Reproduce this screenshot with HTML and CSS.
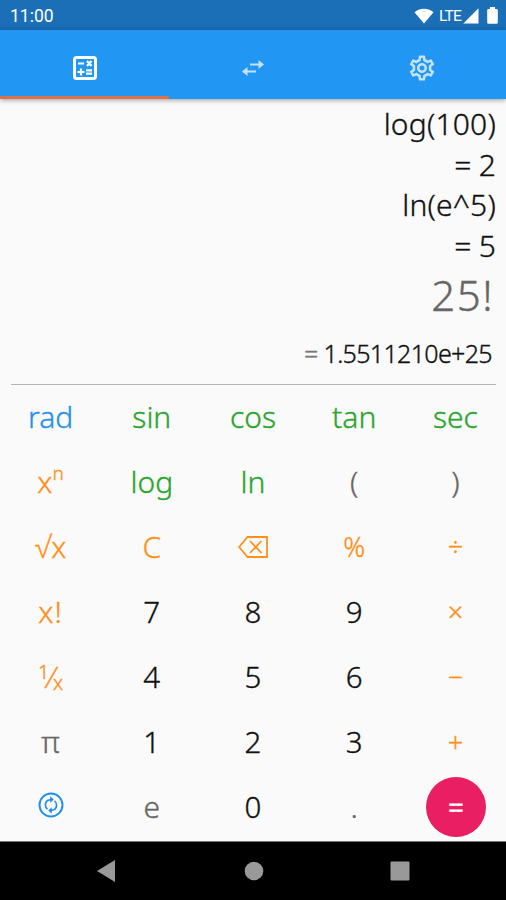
FILE: index.html
```
<!DOCTYPE html>
<html lang="en">
<head>
  <meta charset="UTF-8">
  <meta name="viewport" content="width=device-width, initial-scale=1.0">
  <title>Calculator</title>
  <link rel="stylesheet" href="styles.css">
</head>
<body>

  <div class="status-bar">
    <span class="clock">11:00</span>
    <div class="status-icons">
      <svg width="20" height="16" viewBox="0 0 20 16"><path d="M0.500 4.200C6 -0.400 14 -0.400 19.500 4.200L10 15.600Z" fill="#fff"/></svg>
      <span class="lte">LTE</span>
      <svg width="16" height="16" viewBox="0 0 16 16"><path d="M15.500 0.200V15.500H0.300Z" fill="#fff"/></svg>
      <svg class="battery" width="11" height="17" viewBox="0 0 11 17"><path d="M3 0h5v2h1.500q1.300 0 1.300 1.300v12.200q0 1.300-1.300 1.300h-8q-1.300 0-1.300-1.300V3.300q0-1.300 1.300-1.300H3z" fill="#fff"/></svg>
    </div>
  </div>

  <div class="tabs">
    <div class="tab active">
      <svg width="24" height="24" viewBox="0 0 24 24" fill="none" stroke="#fff">
        <rect x="1.500" y="1.500" width="21" height="21" rx="2" stroke-width="3"/>
        <path d="M5 7.500h6M14 5l4.500 5M18.500 5l-4.500 5M8 12.500v7M4.500 16h7M13 14.300h6M13 17.700h6" stroke-width="2.200"/>
      </svg>
    </div>
    <div class="tab">
      <svg width="24" height="16" viewBox="0 0 24 16" fill="none" stroke="#c4e2fc" stroke-width="2.200">
        <path d="M9 4.500h12M15 11.500H3"/>
        <path d="M17.500 0l5.500 4.500-5.500 4.500zM6.500 7l-5.500 4.500 5.500 4.500z" fill="#c4e2fc" stroke="none"/>
      </svg>
    </div>
    <div class="tab">
      <svg width="30" height="30" viewBox="0 0 24 24" fill="#c4e2fc"><path d="M19.430 12.980c.04-.32.07-.64.07-.98s-.03-.66-.07-.98l2.110-1.650c.19-.15.24-.42.12-.64l-2-3.460c-.12-.22-.39-.3-.61-.22l-2.490 1c-.52-.4-1.080-.73-1.690-.98l-.38-2.650C14.460 2.180 14.250 2 14 2h-4c-.25 0-.46.18-.49.42l-.38 2.650c-.61.25-1.170.59-1.690.98l-2.490-1c-.23-.09-.49 0-.61.22l-2 3.460c-.13.22-.07.49.12.64l2.110 1.650c-.04.32-.07.65-.07.98s.03.66.07.98l-2.110 1.650c-.19.15-.24.42-.12.64l2 3.460c.12.22.39.3.61.22l2.490-1c.52.4 1.080.73 1.690.98l.38 2.650c.03.24.24.42.49.42h4c.25 0 .46-.18.49-.42l.38-2.650c.61-.25 1.170-.59 1.690-.98l2.490 1c.23.09.49 0 .61-.22l2-3.460c.12-.22.07-.49-.12-.64l-2.110-1.650zm-1.980-1.710c.04.31.05.52.05.73 0 .21-.02.43-.05.73l-.14 1.130.89.7 1.080.84-.7 1.210-1.270-.51-1.040-.42-.9.68c-.43.32-.84.56-1.250.73l-1.060.43-.16 1.130-.2 1.350h-1.400l-.19-1.350-.16-1.130-1.060-.43c-.43-.18-.83-.41-1.230-.71l-.91-.7-1.060.43-1.270.51-.7-1.210 1.080-.84.89-.7-.14-1.130c-.03-.31-.05-.54-.05-.74s.02-.43.05-.73l.14-1.130-.89-.7-1.080-.84.7-1.210 1.270.51 1.040.42.9-.68c.43-.32.84-.56 1.250-.73l1.060-.43.16-1.130.2-1.350h1.390l.19 1.350.16 1.130 1.060.43c.43.18.83.41 1.230.71l.91.7 1.060-.43 1.270-.51.7 1.210-1.070.85-.89.7.14 1.130zM12 8c-2.210 0-4 1.790-4 4s1.790 4 4 4 4-1.790 4-4-1.790-4-4-4zm0 6c-1.100 0-2-.9-2-2s.9-2 2-2 2 .9 2 2-.9 2-2 2z"/></svg>
    </div>
  </div>

  <div class="display">
    <div class="history">log(100)</div>
    <div class="history">= 2</div>
    <div class="history">ln(e^5)</div>
    <div class="history">= 5</div>
    <div class="input">25!</div>
    <div class="result"><span class="equals">=</span> 1.5511210e+25</div>
  </div>

  <div class="keypad">
    <div class="key blue">rad</div>
    <div class="key green">sin</div>
    <div class="key green">cos</div>
    <div class="key green">tan</div>
    <div class="key green">sec</div>

    <div class="key orange">x<span class="power">n</span></div>
    <div class="key green">log</div>
    <div class="key green">ln</div>
    <div class="key gray">(</div>
    <div class="key gray">)</div>

    <div class="key orange">√x</div>
    <div class="key orange">C</div>
    <div class="key erase">
      <svg width="30" height="22" viewBox="0 0 30 22" fill="none" stroke="#ff9019" stroke-width="1.800"><path d="M9.500 1H29v20H9.500L1.200 11zM12 5l11.500 12M23.500 5l-11.500 12"/></svg>
    </div>
    <div class="key orange operator">%</div>
    <div class="key orange operator">÷</div>

    <div class="key orange factorial">x!</div>
    <div class="key digit">7</div>
    <div class="key digit">8</div>
    <div class="key digit">9</div>
    <div class="key orange operator">×</div>

    <div class="key orange"><span class="over">1</span><span class="slash">⁄</span><span class="under">x</span></div>
    <div class="key digit">4</div>
    <div class="key digit">5</div>
    <div class="key digit">6</div>
    <div class="key orange operator">−</div>

    <div class="key gray">π</div>
    <div class="key digit">1</div>
    <div class="key digit">2</div>
    <div class="key digit">3</div>
    <div class="key orange operator">+</div>

    <div class="key swap">
      <svg width="26" height="26" viewBox="0 0 26 26" fill="none" stroke="#2490ec" stroke-width="2">
        <circle cx="13" cy="13" r="11.500"/>
        <path d="M9.500 17.200A5.500 5.500 0 0 1 9.500 8.500L13 7.500M16.500 8.800A5.500 5.500 0 0 1 16.500 17.500L13 18.500" stroke-width="1.700"/>
        <path d="M12.200 4.200v6.600l3.600-3.300zM13.800 15.200v6.600l-3.600-3.300z" fill="#2490ec" stroke="none"/>
      </svg>
    </div>
    <div class="key gray">e</div>
    <div class="key digit">0</div>
    <div class="key gray">.</div>
    <div class="key"><div class="submit">=</div></div>
  </div>

  <div class="nav-bar">
    <svg width="18" height="22" viewBox="0 0 18 22"><path d="M18 0v22L0 11z" fill="#999"/></svg>
    <svg width="20" height="20" viewBox="0 0 20 20"><circle cx="10" cy="10" r="9.300" fill="#999"/></svg>
    <svg width="20" height="20" viewBox="0 0 20 20"><rect x="0.500" y="0.500" width="19" height="19" rx="1" fill="#999"/></svg>
  </div>

</body>
</html>
```
FILE: styles.css
```
body {
  font-family: 'Noto Sans', 'Open Sans', sans-serif;
  font-weight: 300;
  margin: 0;
  display: flex;
  flex-direction: column;
  height: 900px;
  overflow: hidden;
  background: #fafafa;
  color: #111;
}

svg {
  display: block;
}

.status-bar {
  display: flex;
  justify-content: space-between;
  align-items: center;
  height: 30px;
  padding: 1px 8px 0 10px;
  box-sizing: border-box;
  background: #1a6fb7;
  color: #fff;
  font-family: Roboto, sans-serif;
  font-weight: 400;
  font-size: 17.5px;
}

.status-icons {
  display: flex;
  align-items: center;
}

.lte {
  font-size: 15.5px;
  letter-spacing: -0.8px;
  margin: 0 2px 0 5px;
}

.battery {
  margin-left: 8px;
}

.tabs {
  display: grid;
  grid-template-columns: repeat(3, 1fr);
  height: 69px;
  background: #2196f3;
  box-shadow: 0 1px 5px rgba(0, 0, 0, 0.4);
}

.tab {
  display: flex;
  align-items: center;
  justify-content: center;
  border-bottom: 3px solid transparent;
  padding: 10px 0 0 1px;
}

.tab.active {
  border-bottom-color: #d9714b;
}

.display {
  display: flex;
  flex-direction: column;
  height: 281px;
  margin: 5px 10px 0 11px;
  border-bottom: 1.5px solid #b5b5b5;
  text-align: right;
  box-sizing: border-box;
  -webkit-text-stroke: 0.35px;
}

.history {
  height: 40.5px;
  line-height: 40.5px;
  font-size: 30px;
  letter-spacing: 0.2px;
  word-spacing: -1px;
}

.input {
  height: 62px;
  line-height: 58px;
  padding-right: 2px;
  font-size: 42px;
  letter-spacing: 1.5px;
  color: #666;
}

.result {
  line-height: 50px;
  padding-right: 4px;
  font-size: 25px;
  letter-spacing: -0.65px;
}

.equals {
  color: #777;
}

.keypad {
  display: grid;
  grid-template-columns: repeat(5, 1fr);
  grid-template-rows: repeat(7, 1fr);
  height: 456px;
  -webkit-text-stroke: 0.35px;
}

.key {
  display: flex;
  align-items: center;
  justify-content: center;
  padding-bottom: 3px;
  font-size: 30px;
}

.digit {
  font-size: 29.5px;
}

.blue {
  color: #2490ec;
}

.green {
  color: #2aa52e;
}

.orange {
  color: #ff9019;
}

.gray {
  color: #666;
}

.power {
  font-size: 19px;
  margin-bottom: 16px;
}

.factorial {
  letter-spacing: 1px;
}

.operator {
  font-size: 27px;
}

.erase {
  padding-bottom: 1px;
}

.over,
.under {
  font-size: 20px;
}

.over {
  margin-bottom: 11px;
}

.under {
  margin-top: 11px;
}

.swap {
  padding-bottom: 6px;
}

.submit {
  width: 60px;
  height: 60px;
  line-height: 61px;
  margin-left: 1px;
  border-radius: 50%;
  background: #e91e63;
  color: #fff;
  font-size: 27px;
  text-align: center;
  -webkit-text-stroke: 0.8px;
}

.nav-bar {
  display: grid;
  grid-template-columns: 21px 20px 20px;
  justify-content: center;
  align-items: center;
  column-gap: 126px;
  flex: 1;
  border-top: 1px solid #777;
  background: #000;
}
```
